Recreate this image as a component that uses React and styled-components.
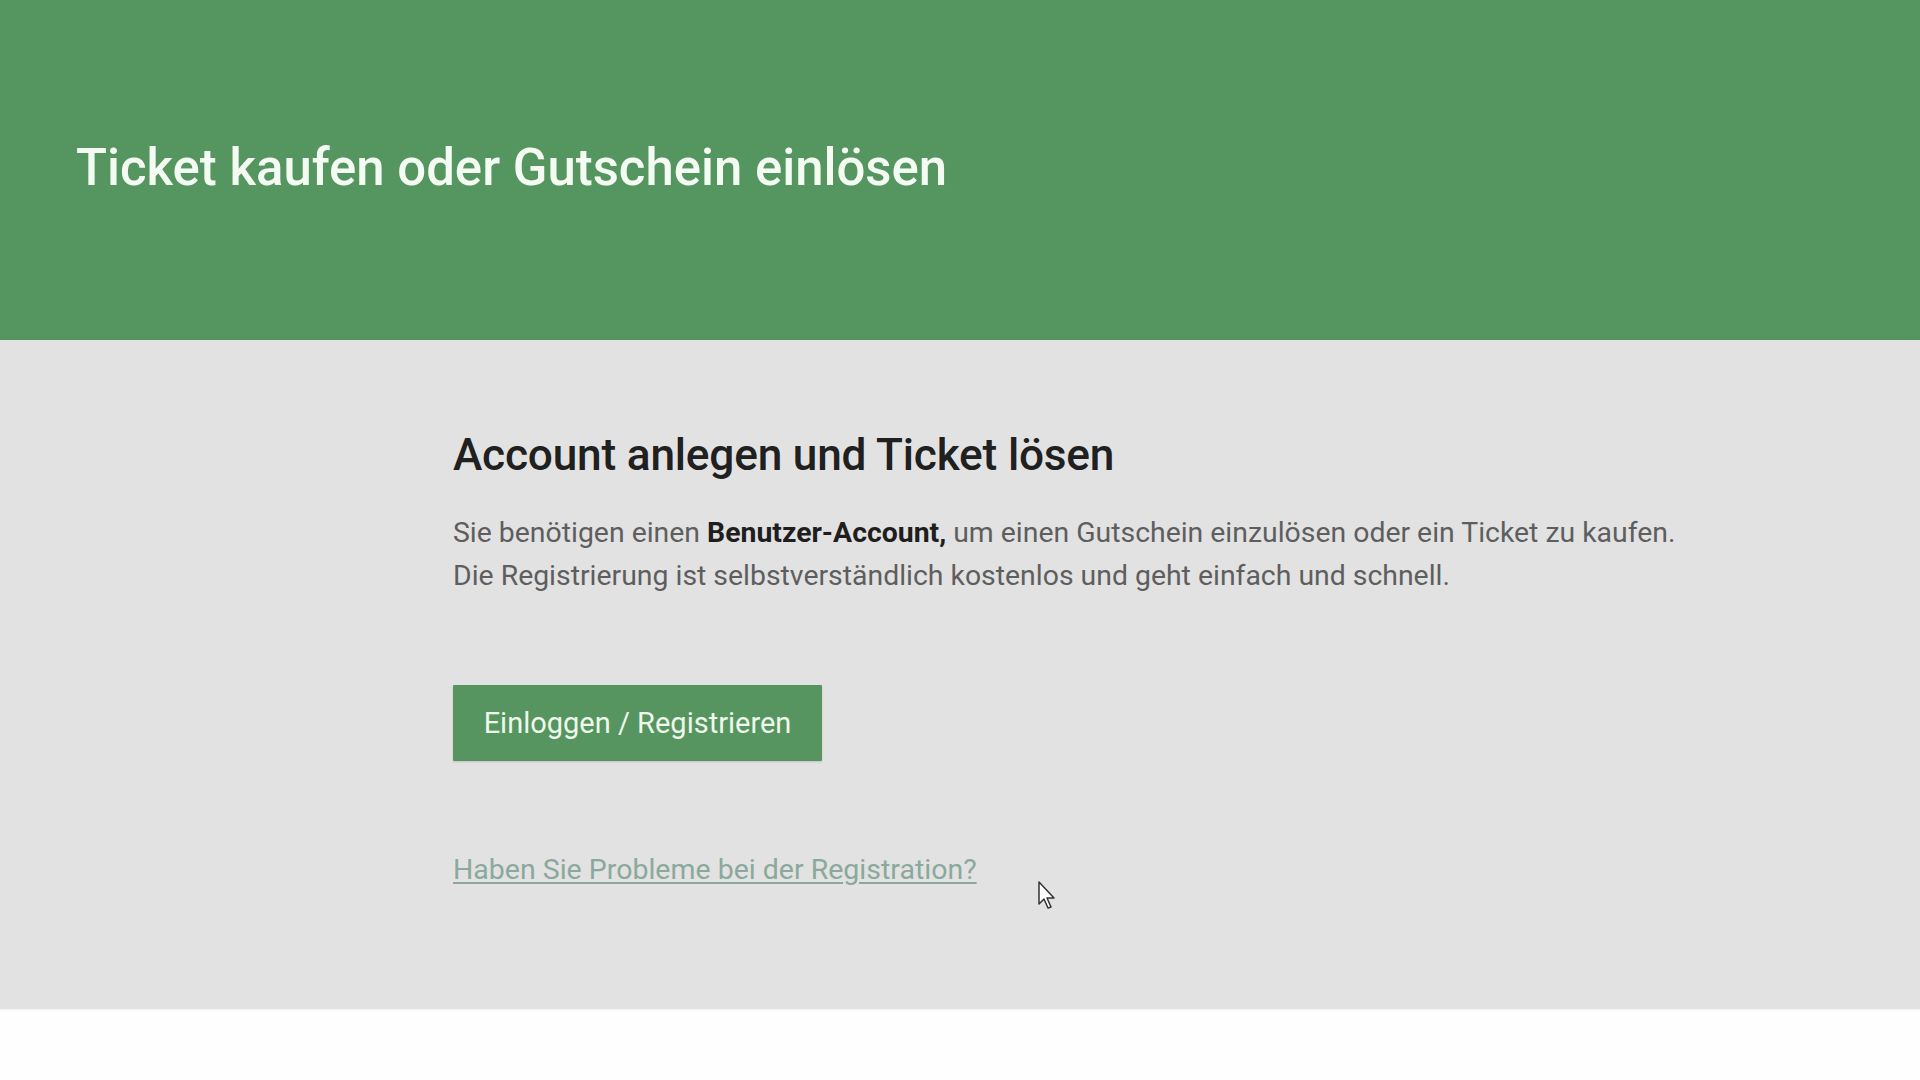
import React from 'react';
import styled, { createGlobalStyle } from 'styled-components';

const GlobalStyle = createGlobalStyle`
    html, body {
        margin: 0;
        padding: 0;
        background: #fefefe;
        font-family: Roboto, "Liberation Sans", Arial, sans-serif;
    }
`;

const Page = styled.div`
    width: 100%;
    height: 1080px;
    overflow: hidden;
    background: #fefefe;
`;

const Header = styled.header`
    height: 340px;
    background: #55955f;
    display: flex;
    align-items: center;
    padding: 0 0 5px 76px;
    box-sizing: border-box;

    h1 {
        margin: 0;
        color: #f4fbf2;
        font-size: 50.9px;
        font-weight: 500;
    }
`;

const Section = styled.section`
    background: #e2e2e2;
    padding: 89px 0 122px 453px;
    position: relative;
    box-shadow: 0 1px 3px rgba(0, 0, 0, 0.06);

    h2 {
        margin: 0;
        color: #202020;
        font-size: 44.2px;
        line-height: 52px;
        font-weight: 500;
        letter-spacing: -0.2px;
    }
`;

const Text = styled.p`
    margin: 30px 0 0 0;
    color: #5e5e5e;
    font-size: 28.4px;
    line-height: 43px;

    strong {
        color: #1e1e1e;
        font-weight: 700;
    }
`;

const Button = styled.button`
    display: block;
    margin-top: 88px;
    width: 369px;
    height: 76px;
    background: #56955f;
    border: none;
    border-radius: 1px;
    box-shadow: 0 1px 2px rgba(0, 0, 0, 0.15);
    color: #eef8ec;
    font-family: inherit;
    font-size: 29px;
    cursor: pointer;
`;

const HelpLink = styled.a`
    display: inline-block;
    margin-top: 92px;
    color: #8aa99c;
    font-size: 28.5px;
    line-height: 34px;
    text-decoration: underline;
    text-underline-offset: 3px;
`;

const Cursor = styled.svg`
    position: absolute;
    left: 1037px;
    top: 540px;
    width: 20px;
    height: 30px;
`;

export default function App() {
    return (
        <Page>
            <GlobalStyle />
            <Header>
                <h1>Ticket kaufen oder Gutschein einlösen</h1>
            </Header>
            <Section>
                <h2>Account anlegen und Ticket lösen</h2>
                <Text>
                    Sie benötigen einen <strong>Benutzer-Account,</strong> um einen Gutschein einzulösen oder ein Ticket zu kaufen.
                    <br />
                    Die Registrierung ist selbstverständlich kostenlos und geht einfach und schnell.
                </Text>
                <Button type="button">Einloggen / Registrieren</Button>
                <HelpLink href="#">Haben Sie Probleme bei der Registration?</HelpLink>
                <Cursor viewBox="0 0 20 30">
                    <path d="M2 2 L2 24 L7 19 L11 28 L14 27 L10 18 L17 18 Z" fill="#fff" stroke="#333" strokeWidth="1.5" strokeLinejoin="round" />
                </Cursor>
            </Section>
        </Page>
    );
}
